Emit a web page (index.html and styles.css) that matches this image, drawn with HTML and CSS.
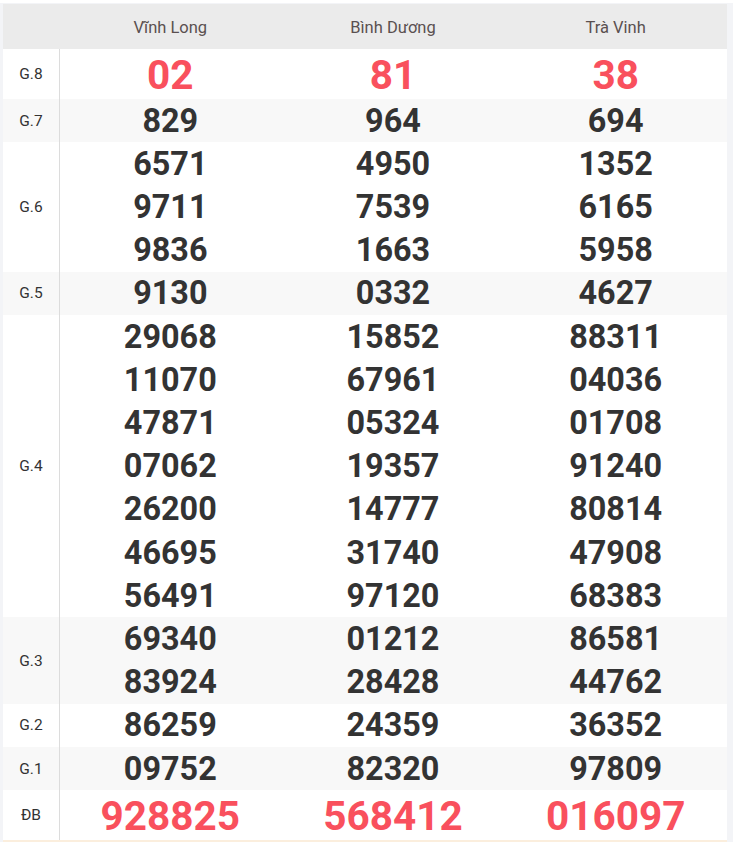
FILE: index.html
```html
<!DOCTYPE html>
<html lang="vi">
<head>
<meta charset="utf-8">
<title>Kết quả xổ số</title>
<link rel="stylesheet" href="styles.css">
</head>
<body>
<div class="page">
  <div class="results">
    <div class="row head">
      <div class="label"></div>
      <div class="cell">Vĩnh Long</div>
      <div class="cell">Bình Dương</div>
      <div class="cell">Trà Vinh</div>
    </div>
    <div class="row big">
      <div class="label">G.8</div>
      <div class="cell red"><span>02</span></div>
      <div class="cell red"><span>81</span></div>
      <div class="cell red"><span>38</span></div>
    </div>
    <div class="row alt">
      <div class="label">G.7</div>
      <div class="cell"><span>829</span></div>
      <div class="cell"><span>964</span></div>
      <div class="cell"><span>694</span></div>
    </div>
    <div class="row">
      <div class="label">G.6</div>
      <div class="cell"><span>6571</span><span>9711</span><span>9836</span></div>
      <div class="cell"><span>4950</span><span>7539</span><span>1663</span></div>
      <div class="cell"><span>1352</span><span>6165</span><span>5958</span></div>
    </div>
    <div class="row alt">
      <div class="label">G.5</div>
      <div class="cell"><span>9130</span></div>
      <div class="cell"><span>0332</span></div>
      <div class="cell"><span>4627</span></div>
    </div>
    <div class="row">
      <div class="label">G.4</div>
      <div class="cell"><span>29068</span><span>11070</span><span>47871</span><span>07062</span><span>26200</span><span>46695</span><span>56491</span></div>
      <div class="cell"><span>15852</span><span>67961</span><span>05324</span><span>19357</span><span>14777</span><span>31740</span><span>97120</span></div>
      <div class="cell"><span>88311</span><span>04036</span><span>01708</span><span>91240</span><span>80814</span><span>47908</span><span>68383</span></div>
    </div>
    <div class="row alt">
      <div class="label">G.3</div>
      <div class="cell"><span>69340</span><span>83924</span></div>
      <div class="cell"><span>01212</span><span>28428</span></div>
      <div class="cell"><span>86581</span><span>44762</span></div>
    </div>
    <div class="row">
      <div class="label">G.2</div>
      <div class="cell"><span>86259</span></div>
      <div class="cell"><span>24359</span></div>
      <div class="cell"><span>36352</span></div>
    </div>
    <div class="row alt">
      <div class="label">G.1</div>
      <div class="cell"><span>09752</span></div>
      <div class="cell"><span>82320</span></div>
      <div class="cell"><span>97809</span></div>
    </div>
    <div class="row big last">
      <div class="label">ĐB</div>
      <div class="cell red"><span>928825</span></div>
      <div class="cell red"><span>568412</span></div>
      <div class="cell red"><span>016097</span></div>
    </div>
  </div>
</div>
</body>
</html>
```
FILE: styles.css
```css
* { box-sizing: border-box; }
html, body { margin: 0; padding: 0; }
body {
  background: #f3f4f7;
  font-family: Roboto, "Liberation Sans", Arial, sans-serif;
  color: #333;
}
.page {
  background: #f3f4f7;
  border-top: 3px solid #fff;
  padding: 1px 6px 0 3px;
  height: 842px;
}
.results {
  background: #fff;
  border-bottom: 2px solid #fbeedd;
}
.row {
  display: grid;
  grid-template-columns: 56px repeat(3, 1fr);
}
.row.alt { background: #f8f8f8; }
.label {
  border-right: 1px solid #dcdcdc;
  display: flex;
  align-items: center;
  justify-content: center;
  font-size: 15.5px;
  color: #333;
  width: 57px;
}
.cell {
  display: flex;
  flex-direction: column;
  align-items: center;
  justify-content: center;
  font-weight: 700;
  font-size: 32.4px;
  line-height: 41.7px;
  color: #333;
}
.cell span { display: block; padding-top: 1.5px; }
.row.head {
  background: #ebebeb;
  height: 45px;
}
.row.head .label { border-right: none; }
.row.head .cell {
  font-weight: 400;
  font-size: 16.5px;
  line-height: 20px;
  color: #5a5050;
  padding-top: 2px;
}
.row.big .cell {
  font-size: 40.5px;
  line-height: 48.5px;
}
.red { color: #f9505d; }
.row.big .cell.red { color: #f9505d; }
```
